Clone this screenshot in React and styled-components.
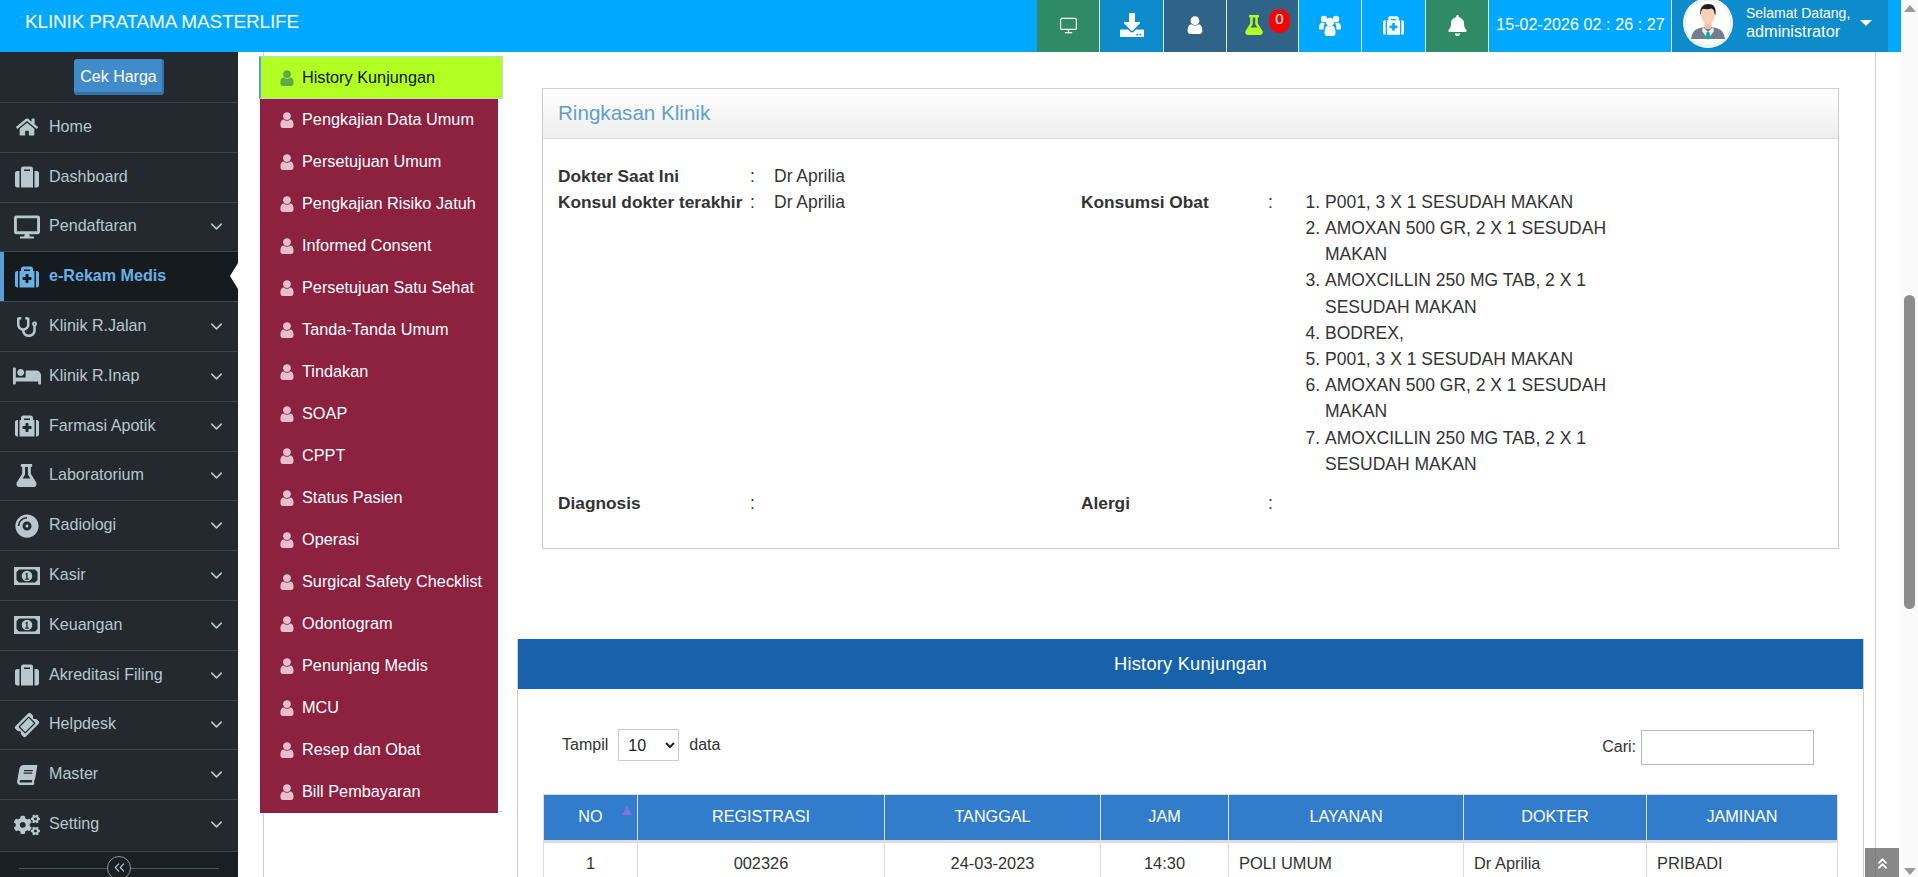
import React from 'react';
import styled, { createGlobalStyle } from 'styled-components';
import {
  FaHome, FaSuitcase, FaDesktop, FaMedkit, FaStethoscope, FaBed, FaFlask, FaCompactDisc,
  FaTicketAlt, FaBook, FaCogs, FaDownload, FaBell,
} from 'react-icons/fa';
import { ChevronDown, ChevronsLeft, ChevronsUp, Monitor } from 'lucide-react';

const Global = createGlobalStyle`
  html, body { margin: 0; padding: 0; height: 100%; overflow: hidden; background: #fff; }
  body { font-family: "Liberation Sans", Arial, sans-serif; font-size: 16px; color: #333; }
  * { box-sizing: border-box; }
`;

const Root = styled.div`display: flex; width: 100%; height: 100vh; overflow: hidden; position: relative;`;
const Page = styled.div`flex: 1; min-width: 0; display: flex; flex-direction: column;`;

/* ---------- header ---------- */
const Header = styled.header`
  flex: none; height: 52px; display: flex; align-items: stretch; background: #00a8ff; color: #fff; padding-right: 13px;
`;
const Brand = styled.div`flex: 1; padding-left: 25px; font-size: 19px; line-height: 44px; letter-spacing: -0.16px;`;
const ToolBtn = styled.div`
  position: relative; flex: none; width: ${p => p.$w}px; background: ${p => p.$bg};
  border-right: 1px solid #dfe8ee; display: flex; align-items: center; justify-content: center; color: #fff;
  padding-right: ${p => p.$pr || 0}px; padding-bottom: 2px;
`;
const Badge = styled.span`
  position: absolute; left: 42px; top: 9px; width: 21px; height: 24px; background: #f00; border-radius: 10px;
  color: #fff; font-size: 15px; line-height: 19px; text-align: center;
`;
const DateBox = styled.div`
  flex: none; width: 183px; border-right: 1px solid #dfe8ee; font-size: 16px; letter-spacing: 0.1px;
  display: flex; align-items: center; justify-content: center; white-space: pre; padding: 0 0 2px 1px;
`;
const UserBox = styled.div`
  flex: none; width: 216px; background: #0d8bcb; display: flex; align-items: flex-start; padding-left: 11px;
`;
const UserText = styled.div`margin-left: 13px; padding-top: 5px; display: flex; flex-direction: column; width: 103px;`;
const Hello = styled.span`font-size: 14px; line-height: 17px; white-space: nowrap;`;
const UserName = styled.span`font-size: 16.3px; line-height: 19px;`;
const Caret = styled.span`
  margin: 20px 0 0 11px; width: 0; height: 0; border-left: 6px solid transparent; border-right: 6px solid transparent; border-top: 6px solid #fff;
`;

/* ---------- body ---------- */
const Body = styled.div`flex: 1; min-height: 0; display: flex;`;
const Sidebar = styled.aside`flex: none; width: 238px; background: #23292e; display: flex; flex-direction: column;`;
const SideTop = styled.div`flex: none; height: 50px; display: flex; justify-content: center; padding-top: 7px;`;
const PriceBtn = styled.div`
  width: 90px; height: 36px; background: #428bca; border-radius: 3px; border-right: 2px solid #3672a8; border-bottom: 3px solid #3672a8;
  border-top: 1px solid #3f84bf; color: #fff; font-size: 16px; line-height: 33px; text-align: center; padding-left: 1px; white-space: nowrap;
`;
const MenuRow = styled.div`
  flex: none; height: 49.8px; position: relative; display: flex; align-items: center; border-top: 1px solid #3d464c;
  color: ${p => (p.$active ? '#6bb0e4' : '#b8c7ce')}; background: ${p => (p.$active ? '#161b1f' : 'transparent')};
  font-weight: ${p => (p.$active ? 700 : 400)}; font-size: 16.1px; padding-bottom: 2px;
  ${p => p.$active && 'box-shadow: inset 4px 0 0 #5a9fd4;'}
`;
const MenuIcon = styled.span`flex: none; width: 49px; padding-left: 4px; display: flex; justify-content: center; align-items: center; padding-top: 2px;`;
const MenuLabel = styled.span`flex: 1; white-space: nowrap;`;
const Chevron = styled.span`flex: none; width: 31px; display: flex; padding-top: 2px; color: #b8c7ce;`;
const Notch = styled.span`
  position: absolute; right: 0; top: 11px; width: 0; height: 0;
  border-top: 13px solid transparent; border-bottom: 13px solid transparent; border-right: 8px solid #fff;
`;
const Collapse = styled.div`
  flex: 1; position: relative; margin-top: 2px; border-top: 1px solid #3d464c; background: #1a1f24;
  display: flex; align-items: flex-start; justify-content: center; padding-top: 4px;
  &::before { content: ''; position: absolute; left: 19px; right: 19px; top: 16px; height: 1px; background: #4a5862; }
`;
const CollapseBtn = styled.span`
  position: relative; width: 24px; height: 24px; border-radius: 50%; border: 1px solid #8a98a2; background: #1a1f24;
  color: #b8c7ce; display: flex; align-items: center; justify-content: center;
`;

/* ---------- content ---------- */
const Content = styled.main`flex: 1; min-width: 0; display: flex; padding-left: 25px; padding-right: 25px;`;
const Frame = styled.div`flex: 1; min-width: 0; display: flex; align-items: flex-start; border-left: 1px solid #ccc; border-right: 1px solid #ccc;`;
const SubWrap = styled.nav`flex: none; width: 243px; margin: 4px 0 0 -4px; height: 756px; border-bottom: 1px solid #ddd;`;
const SubItem = styled.div`
  height: 42px; width: 238px; background: #8c2140; color: #fff; display: flex; align-items: center; font-size: 16.3px; white-space: nowrap; padding: 0 0 1px 19px;
`;
const SubActive = styled(SubItem)`
  height: 43px; width: 244px; margin-left: -1px; background: #b2ff23; color: #111; padding: 0 0 0 18px;
  border: 1px solid #c6d6d8; border-left: 2px solid #5a9fd4;
`;
const SubIcon = styled.span`flex: none; width: 23px; display: flex; color: ${p => (p.$active ? '#62a648' : '#e5bfcb')};`;
const Main = styled.div`flex: 1; min-width: 0; padding: 36px 11px 0 14px;`;

const SummaryPanel = styled.section`margin: 0 25px 0 25px; height: 461px; border: 1px solid #ccc;`;
const SummaryHead = styled.div`
  height: 50px; background: linear-gradient(#fff, #eee); border-bottom: 1px solid #ddd; color: #5f9fcb;
  font-size: 20.6px; line-height: 47px; padding-left: 15px;
`;
const SummaryGrid = styled.div`
  display: grid; grid-template-columns: 192px 24px 307px 187px 32px 340px; padding: 23.5px 0 0 15px; font-size: 17.5px; line-height: 26.2px;
`;
const Label = styled.b`grid-column: ${p => p.$col}; font-size: 17.3px; white-space: nowrap;`;
const Colon = styled.span``;
const Value = styled.span``;
const DrugList = styled.ol`margin: 0 0 13px; padding-left: 25px; color: #333;`;

const HistoryPanel = styled.section`margin-top: 90px; border: 1px solid #ccc; border-top: 0;`;
const HistoryHead = styled.div`height: 50px; background: #1862ac; color: #fff; font-size: 18.3px; letter-spacing: 0.2px; line-height: 50px; text-align: center;`;
const HistoryBody = styled.div`padding: 41px 21px 0 25px;`;
const TableTools = styled.div`display: flex; justify-content: space-between; align-items: flex-start; height: 64px;`;
const Show = styled.label`display: flex; align-items: center; font-size: 16px; padding-left: 19px; gap: 10px; height: 30px;`;
const PageSelect = styled.select`
  width: 61px; height: 32px; border: 1px solid #ccc; background: #fff; font: 16px "Liberation Sans", Arial, sans-serif; color: #222; padding-left: 5px; border-radius: 0;
`;
const Search = styled.label`display: flex; align-items: flex-start; font-size: 16px; gap: 5px; padding-right: 28px; line-height: 34px;`;
const SearchInput = styled.input`width: 173px; height: 35px; border: 1px solid #bbb; background: #fff; outline: none;`;
const Table = styled.table`width: 1294px; table-layout: fixed; border-collapse: collapse; font-size: 16.4px;`;
const Col = styled.col`width: ${p => p.$w}px;`;
const Th = styled.th`
  height: 47px; background: #317dcb; color: #fff; font-weight: 400; font-size: 16.2px; text-align: center; border: 1px solid #ddd; border-bottom: 3px solid #ddd; position: relative; padding: 0 0 3px;
`;
const SortMark = styled.span`
  position: absolute; right: 5px; top: 11px; width: 0; height: 0;
  border-left: 5px solid transparent; border-right: 5px solid transparent; border-bottom: 9px solid #7f74d8;
`;
const Td = styled.td`
  height: 42px; border: 1px solid #ddd; text-align: ${p => (p.$left ? 'left' : 'center')}; padding: 0 10px; color: #333;
`;

/* ---------- scrollbar and overlay ---------- */
const FauxScroll = styled.div`flex: none; width: 17px; background: #fafafa; display: flex; flex-direction: column; align-items: center;`;
const ArrowUp = styled.span`margin-top: 5px; width: 0; height: 0; border-left: 6px solid transparent; border-right: 6px solid transparent; border-bottom: 7px solid #999;`;
const Thumb = styled.span`margin-top: 283px; width: 11px; height: 314px; border-radius: 6px; background: #8c8c8c;`;
const ArrowDown = styled.span`margin-top: auto; margin-bottom: 2px; width: 0; height: 0; border-left: 6px solid transparent; border-right: 6px solid transparent; border-top: 7px solid #999;`;
const ToTop = styled.div`
  position: absolute; left: 1865px; bottom: 0; width: 34px; height: 29px; background: rgba(110,110,110,.82); color: #fff;
  display: flex; align-items: center; justify-content: center; padding-top: 1px;
`;

const UserGlyph = ({ size = 16 }) => (
  <svg width={size} height={size} viewBox="230 110 1340 1560" fill="currentColor" aria-hidden="true">
    <path d="M1536 1399q0 109-62.5 187t-150.5 78h-854q-88 0-150.5-78t-62.5-187q0-85 8.5-160.5t31.5-152 58.5-131 94-89 134.5-34.5q131 128 313 128t313-128q76 0 134.5 34.5t94 89 58.5 131 31.5 152 8.5 160.5zm-256-887q0 159-112.5 271.5t-271.5 112.5-271.5-112.5-112.5-271.5 112.5-271.5 271.5-112.5 271.5 112.5 112.5 271.5z" />
  </svg>
);

const GroupGlyph = () => (
  <svg width="22" height="21" viewBox="0 0 22 21" fill="currentColor" aria-hidden="true">
    <circle cx="5" cy="4" r="3.2" />
    <circle cx="17" cy="4" r="3.2" />
    <path d="M0 13c0-3 1-5 3-5.500 1 .6 2 .8 3 .6-1 1.400-1.500 3.400-1.500 5.900v.5H1.500C.6 14.500 0 14 0 13z" />
    <path d="M22 13c0-3-1-5-3-5.500-1 .6-2 .8-3 .6 1 1.400 1.500 3.400 1.500 5.900v.5h3c.9 0 1.500-.5 1.500-1.500z" />
    <circle cx="11" cy="7" r="4.200" />
    <path d="M5.500 18c0-4 1-6.500 3-7.200 1.600 1 3.400 1 5 0 2 .7 3 3.200 3 7.200 0 1.800-1 3-2.500 3H8c-1.500 0-2.500-1.200-2.500-3z" />
  </svg>
);

const MoneyGlyph = () => (
  <svg width="26" height="18" viewBox="0 0 26 18" aria-hidden="true">
    <path fill="currentColor" fillRule="evenodd" d="M0 0h26v18H0zM5 2.500 2.500 5v8L5 15.500h16l2.500-2.500V5L21 2.500z" />
    <circle cx="13" cy="9" r="5.300" fill="currentColor" />
    <path d="M11.300 6.800 13.600 5.500v6h1.300v1.200h-3.800v-1.200h1.200V7.300l-.8.500z" fill="#23292e" />
  </svg>
);

const Avatar = () => (
  <svg width="50" height="50" viewBox="0 0 50 50" aria-hidden="true" style={{ flex: 'none', marginTop: -2 }}>
    <circle cx="25" cy="25" r="25" fill="#fff" />
    <circle cx="25" cy="25" r="23" fill="#fff" stroke="#d8dde2" strokeWidth="0.7" />
    <path d="M8 41c1-7 4-10 9-11l8-2 8 2c5 1 8 4 9 11z" fill="#6f7f8f" />
    <path d="M20 29l5 5 5-5 1 4-6 8-6-8z" fill="#e9eef0" />
    <path d="M23.6 34h2.8l1 6-2.4 1.4-2.4-1.4z" fill="#16a3ad" />
    <rect x="21.5" y="22" width="7" height="9" rx="2" fill="#efbfa3" />
    <ellipse cx="25" cy="17" rx="7" ry="9" fill="#f8d0b8" />
    <path d="M17.5 17c-1-7 2-11 7.500-11s8.500 3 7.500 11l-1-1c0-3-1-5-3-5.500-3 .8-6 .8-8.500 .2-1.500 1-2 3-2 5.300z" fill="#1e1e22" />
  </svg>
);

const menu = [
  ['Home', <FaHome size={22} />, false],
  ['Dashboard', <FaSuitcase size={24} />, false],
  ['Pendaftaran', <FaDesktop size={26} />, true],
];
const menuAfter = [
  ['Klinik R.Jalan', <FaStethoscope size={20} />],
  ['Klinik R.Inap', <FaBed size={28} />],
  ['Farmasi Apotik', <FaMedkit size={24} />],
  ['Laboratorium', <FaFlask size={23} />],
  ['Radiologi', <FaCompactDisc size={24} />],
  ['Kasir', <MoneyGlyph />],
  ['Keuangan', <MoneyGlyph />],
  ['Akreditasi Filing', <FaSuitcase size={24} />],
  ['Helpdesk', <FaTicketAlt size={22} style={{ transform: 'rotate(-45deg)' }} />],
  ['Master', <FaBook size={20} style={{ transform: 'skewX(-10deg)' }} />],
  ['Setting', <FaCogs size={26} />],
];
const subs = [
  'Pengkajian Data Umum', 'Persetujuan Umum', 'Pengkajian Risiko Jatuh', 'Informed Consent', 'Persetujuan Satu Sehat',
  'Tanda-Tanda Umum', 'Tindakan', 'SOAP', 'CPPT', 'Status Pasien', 'Operasi', 'Surgical Safety Checklist', 'Odontogram',
  'Penunjang Medis', 'MCU', 'Resep dan Obat', 'Bill Pembayaran',
];
const drugs = [
  'P001, 3 X 1 SESUDAH MAKAN', 'AMOXAN 500 GR, 2 X 1 SESUDAH MAKAN', 'AMOXCILLIN 250 MG TAB, 2 X 1 SESUDAH MAKAN', 'BODREX,',
  'P001, 3 X 1 SESUDAH MAKAN', 'AMOXAN 500 GR, 2 X 1 SESUDAH MAKAN', 'AMOXCILLIN 250 MG TAB, 2 X 1 SESUDAH MAKAN',
];
const cols = [94, 247, 216, 128, 235, 183, 191];
const heads = ['REGISTRASI', 'TANGGAL', 'JAM', 'LAYANAN', 'DOKTER', 'JAMINAN'];

const Row = ({ label, icon, chevron = true }) => (
  <MenuRow>
    <MenuIcon>{icon}</MenuIcon>
    <MenuLabel>{label}</MenuLabel>
    {chevron && <Chevron><ChevronDown size={19} strokeWidth={2} /></Chevron>}
  </MenuRow>
);

export default function App() {
  return (
    <Root>
      <Global />
      <Page>
        <Header>
          <Brand>KLINIK PRATAMA MASTERLIFE</Brand>
          <ToolBtn $w={63} $bg="#2f8b65"><Monitor size={19} strokeWidth={1.5} /></ToolBtn>
          <ToolBtn $w={64} $bg="#0d8bcb"><FaDownload size={24} /></ToolBtn>
          <ToolBtn $w={63} $bg="#2f6388"><UserGlyph size={18} /></ToolBtn>
          <ToolBtn $w={72} $bg="#2f6388" $pr={18}>
            <FaFlask size={20} color="#b2ff23" />
            <Badge>0</Badge>
          </ToolBtn>
          <ToolBtn $w={63} $bg="#00a8ff"><GroupGlyph /></ToolBtn>
          <ToolBtn $w={64} $bg="#00a8ff"><FaMedkit size={21} /></ToolBtn>
          <ToolBtn $w={63} $bg="#2f8b65"><FaBell size={21} /></ToolBtn>
          <DateBox>15-02-2026 02 : 26 : 27</DateBox>
          <UserBox>
            <Avatar />
            <UserText>
              <Hello>Selamat Datang,</Hello>
              <UserName>administrator</UserName>
            </UserText>
            <Caret />
          </UserBox>
        </Header>
        <Body>
          <Sidebar>
            <SideTop><PriceBtn>Cek Harga</PriceBtn></SideTop>
            {menu.map(([label, icon, chev]) => <Row key={label} label={label} icon={icon} chevron={chev} />)}
            <MenuRow $active>
              <MenuIcon><FaMedkit size={24} /></MenuIcon>
              <MenuLabel>e-Rekam Medis</MenuLabel>
              <Notch />
            </MenuRow>
            {menuAfter.map(([label, icon]) => <Row key={label} label={label} icon={icon} />)}
            <Collapse>
              <CollapseBtn><ChevronsLeft size={17} strokeWidth={1.6} /></CollapseBtn>
            </Collapse>
          </Sidebar>
          <Content>
            <Frame>
              <SubWrap>
                <SubActive>
                  <SubIcon $active><UserGlyph /></SubIcon>
                  History Kunjungan
                </SubActive>
                {subs.map(s => (
                  <SubItem key={s}>
                    <SubIcon><UserGlyph /></SubIcon>
                    {s}
                  </SubItem>
                ))}
              </SubWrap>
              <Main>
                <SummaryPanel>
                  <SummaryHead>Ringkasan Klinik</SummaryHead>
                  <SummaryGrid>
                    <Label $col={1}>Dokter Saat Ini</Label><Colon>:</Colon><Value>Dr Aprilia</Value>
                    <Label $col={1}>Konsul dokter terakhir</Label><Colon>:</Colon><Value>Dr Aprilia</Value>
                    <Label $col={4}>Konsumsi Obat</Label><Colon>:</Colon>
                    <DrugList>{drugs.map((d, i) => <li key={i}>{d}</li>)}</DrugList>
                    <Label $col={1}>Diagnosis</Label><Colon>:</Colon><Value />
                    <Label $col={4}>Alergi</Label><Colon>:</Colon>
                  </SummaryGrid>
                </SummaryPanel>
                <HistoryPanel>
                  <HistoryHead>History Kunjungan</HistoryHead>
                  <HistoryBody>
                    <TableTools>
                      <Show>
                        Tampil
                        <PageSelect defaultValue="10"><option>10</option><option>25</option><option>50</option></PageSelect>
                        data
                      </Show>
                      <Search>Cari:<SearchInput /></Search>
                    </TableTools>
                    <Table>
                      <colgroup>{cols.map((w, i) => <Col key={i} $w={w} />)}</colgroup>
                      <thead>
                        <tr>
                          <Th>NO<SortMark /></Th>
                          {heads.map(h => <Th key={h}>{h}</Th>)}
                        </tr>
                      </thead>
                      <tbody>
                        <tr>
                          <Td>1</Td><Td>002326</Td><Td>24-03-2023</Td><Td>14:30</Td>
                          <Td $left>POLI UMUM</Td><Td $left>Dr Aprilia</Td><Td $left>PRIBADI</Td>
                        </tr>
                      </tbody>
                    </Table>
                  </HistoryBody>
                </HistoryPanel>
              </Main>
            </Frame>
          </Content>
        </Body>
      </Page>
      <FauxScroll>
        <ArrowUp />
        <Thumb />
        <ArrowDown />
      </FauxScroll>
      <ToTop><ChevronsUp size={17} strokeWidth={2.5} /></ToTop>
    </Root>
  );
}
